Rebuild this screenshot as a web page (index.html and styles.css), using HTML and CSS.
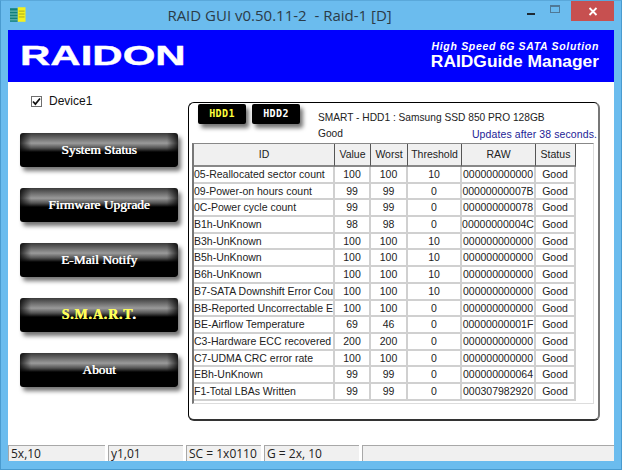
FILE: index.html
```html
<!DOCTYPE html>
<html lang="en">
<head>
<meta charset="UTF-8" />
<title>RAID GUI</title>
<link rel="stylesheet" href="styles.css">
</head>
<body>
<div class="window">
    <div class="titlebar">
        <svg class="app-icon" width="16" height="16" viewBox="0 0 16 16">
            <rect x="0" y="1" width="8" height="14" fill="#12807c" />
            <rect x="8" y="0" width="8" height="15" fill="#f4f01e" />
            <path d="M0 4h8M0 7h8M0 10h8M0 13h8" stroke="#7cc4c0" stroke-width="1" />
            <path d="M9 4h6M9 7h6M9 10h6" stroke="#a8a820" stroke-width="1" />
        </svg>
        <div class="title">RAID GUI v0.50.11-2&nbsp; - Raid-1 [D]</div>
        <div class="win-btn min"><span></span></div>
        <div class="win-btn max"><span></span></div>
        <div class="win-btn close">
            <svg width="10" height="9" viewBox="0 0 10 9"><path d="M1.5 1l7 7M8.5 1l-7 7" stroke="#fff" stroke-width="1.8" /></svg>
        </div>
    </div>

    <div class="client">
        <div class="banner">
            <div class="logo">RAIDON</div>
            <div class="tagline">
                <div class="tag-small">High Speed 6G SATA Solution</div>
                <div class="tag-big">RAIDGuide Manager</div>
            </div>
        </div>

        <div class="main">
            <div class="sidebar">
                <label class="device">
                    <span class="checkbox">
                        <svg width="9" height="9" viewBox="0 0 9 9"><path d="M1 4.5l2.4 2.6L8 1.5" fill="none" stroke="#111" stroke-width="1.7" /></svg>
                    </span>
                    Device1
                </label>
                <div class="nav">
                    <div class="nav-btn">System Status</div>
                    <div class="nav-btn">Firmware Upgrade</div>
                    <div class="nav-btn">E-Mail Notify</div>
                    <div class="nav-btn active">S.M.A.R.T<span class="dot">.</span></div>
                    <div class="nav-btn">About</div>
                </div>
            </div>

            <div class="panel">
                <div class="panel-top">
                    <div class="tabs">
                        <div class="tab active">HDD1</div>
                        <div class="tab">HDD2</div>
                    </div>
                    <div class="info">
                        <div>SMART - HDD1 : Samsung SSD 850 PRO 128GB</div>
                        <div class="info-line">
                            <span>Good</span>
                            <span class="updates">Updates after 38 seconds.</span>
                        </div>
                    </div>
                </div>

                <div class="grid">
                    <div class="row head">
                        <div>ID</div><div>Value</div><div>Worst</div><div>Threshold</div><div>RAW</div><div>Status</div>
                    </div>
                    <div class="row"><div>05-Reallocated sector count</div><div>100</div><div>100</div><div>10</div><div>000000000000</div><div>Good</div></div>
                    <div class="row"><div>09-Power-on hours count</div><div>99</div><div>99</div><div>0</div><div>00000000007B</div><div>Good</div></div>
                    <div class="row"><div>0C-Power cycle count</div><div>99</div><div>99</div><div>0</div><div>000000000078</div><div>Good</div></div>
                    <div class="row"><div>B1h-UnKnown</div><div>98</div><div>98</div><div>0</div><div>00000000004C</div><div>Good</div></div>
                    <div class="row"><div>B3h-UnKnown</div><div>100</div><div>100</div><div>10</div><div>000000000000</div><div>Good</div></div>
                    <div class="row"><div>B5h-UnKnown</div><div>100</div><div>100</div><div>10</div><div>000000000000</div><div>Good</div></div>
                    <div class="row"><div>B6h-UnKnown</div><div>100</div><div>100</div><div>10</div><div>000000000000</div><div>Good</div></div>
                    <div class="row"><div>B7-SATA Downshift Error Count</div><div>100</div><div>100</div><div>10</div><div>000000000000</div><div>Good</div></div>
                    <div class="row"><div>BB-Reported Uncorrectable Errors</div><div>100</div><div>100</div><div>0</div><div>000000000000</div><div>Good</div></div>
                    <div class="row"><div>BE-Airflow Temperature</div><div>69</div><div>46</div><div>0</div><div>00000000001F</div><div>Good</div></div>
                    <div class="row"><div>C3-Hardware ECC recovered</div><div>200</div><div>200</div><div>0</div><div>000000000000</div><div>Good</div></div>
                    <div class="row"><div>C7-UDMA CRC error rate</div><div>100</div><div>100</div><div>0</div><div>000000000000</div><div>Good</div></div>
                    <div class="row"><div>EBh-UnKnown</div><div>99</div><div>99</div><div>0</div><div>000000000064</div><div>Good</div></div>
                    <div class="row"><div>F1-Total LBAs Written</div><div>99</div><div>99</div><div>0</div><div>000307982920</div><div>Good</div></div>
                </div>
            </div>
        </div>

        <div class="statusbar">
            <div class="cell w1">5x,10</div>
            <div class="cell w2">y1,01</div>
            <div class="cell w2">SC = 1x0110</div>
            <div class="cell w4">G = 2x, 10</div>
            <div class="cell fill"></div>
        </div>
    </div>
</div>
</body>
</html>
```

FILE: styles.css
```css
* {
    box-sizing: border-box;
}
body, html {
    margin: 0;
    height: 100%;
    font-family: "Liberation Sans", Arial, sans-serif;
}
.window {
    width: 622px;
    height: 470px;
    background: #6bbcee;
    border: 1px solid #4a9bcf;
    border-top-color: #5aa8da;
    padding: 0 7px 8px 7px;
    display: flex;
    flex-direction: column;
}

/* title bar */
.titlebar {
    height: 29px;
    display: flex;
    align-items: flex-start;
    flex-shrink: 0;
}
.app-icon {
    margin: 6px 0 0 2px;
}
.title {
    width: 524px;
    padding-top: 5px;
    text-align: center;
    font-family: "Open Sans", sans-serif;
    font-size: 15px;
    line-height: 18px;
    color: #2b3b47;
}
.win-btn {
    display: flex;
    align-items: center;
    justify-content: center;
}
.win-btn.min {
    width: 16px;
    height: 20px;
    margin-left: -10px;
}
.win-btn.min span {
    width: 8px;
    height: 2px;
    margin-top: 6px;
    background: #1e2a33;
}
.win-btn.max {
    width: 26px;
    height: 20px;
    margin-left: 1px;
}
.win-btn.max span {
    width: 10px;
    height: 8px;
    margin: -4px 0 0 4px;
    border: 1px solid #4f7896;
    border-top-width: 2px;
}
.win-btn.close {
    width: 44px;
    height: 20px;
    margin-left: 6px;
    background: #c75050;
}

/* client area */
.client {
    flex: 1;
    background: #fff;
    display: flex;
    flex-direction: column;
    min-height: 0;
}
.banner {
    height: 52px;
    background: #0000fe;
    color: #fff;
    display: flex;
    justify-content: space-between;
    flex-shrink: 0;
}
.logo {
    font-weight: bold;
    font-size: 28px;
    line-height: 28px;
    margin: 12px 0 0 12px;
    transform: scaleX(1.5);
    transform-origin: left center;
    -webkit-text-stroke: 0.4px #fff;
}
.tagline {
    padding: 11px 15px 0 0;
    text-align: right;
}
.tag-small {
    font-size: 10.5px;
    line-height: 11px;
    font-weight: bold;
    font-style: italic;
    letter-spacing: 0.68px;
}
.tag-big {
    font-size: 17.4px;
    line-height: 19px;
    font-weight: bold;
}

.main {
    flex: 1;
    display: flex;
    min-height: 0;
}
.sidebar {
    width: 180px;
    flex-shrink: 0;
}
.device {
    display: flex;
    align-items: center;
    gap: 7px;
    margin: 12px 0 0 23px;
    font-size: 12px;
    line-height: 14px;
    color: #111;
}
.checkbox {
    width: 11px;
    height: 11px;
    border: 1px solid #6f6f6f;
    background: #fff;
    display: flex;
    align-items: center;
    justify-content: center;
}
.nav {
    display: flex;
    flex-direction: column;
    gap: 21px;
    margin: 25px 0 0 12px;
}
.nav-btn {
    width: 158px;
    height: 34px;
    border-radius: 3px;
    background:
        linear-gradient(90deg, rgba(0, 0, 0, 0.75), rgba(0, 0, 0, 0) 7%, rgba(0, 0, 0, 0) 93%, rgba(0, 0, 0, 0.75)),
        linear-gradient(#3a3a3a 0, #6a6a6a 15%, #9a9a9a 30%, #555 44%, #000 56%, #000 100%);
    box-shadow: 3px 4px 4px rgba(0, 0, 0, 0.55);
    color: #fff;
    font-family: "Liberation Serif", serif;
    font-size: 13.4px;
    line-height: 34px;
    text-align: center;
    text-shadow: 0.5px 0 0 currentColor;
}
.nav-btn.active {
    color: #ffff5a;
    font-weight: bold;
    font-size: 14px;
    letter-spacing: 0.8px;
}
.dot {
    color: #fff;
}

/* smart panel */
.panel {
    width: 412px;
    height: 319px;
    margin-top: 20px;
    padding: 0 1px 0 3px;
    border: 1px solid #000;
    border-right: 2px solid #777;
    border-bottom: 2px solid #333;
    border-radius: 6px;
}
.panel-top {
    height: 40px;
    display: flex;
}
.tabs {
    display: flex;
    gap: 6px;
    margin-left: 6px;
    width: 120px;
    flex-shrink: 0;
}
.tab {
    width: 48px;
    height: 20px;
    margin-top: 1px;
    background: #000;
    border-radius: 2px;
    box-shadow: 3px 4px 4px rgba(0, 0, 0, 0.55);
    color: #fff;
    font-family: "DejaVu Sans Mono", monospace;
    font-weight: bold;
    font-size: 10px;
    line-height: 19px;
    letter-spacing: 0.4px;
    text-align: center;
}
.tab.active {
    color: #ffff3c;
}
.info {
    flex: 1;
    font-size: 10.2px;
    line-height: 16px;
    color: #222;
    padding-top: 7px;
}
.info-line {
    display: flex;
    justify-content: space-between;
}
.updates {
    color: #1c1c96;
    font-size: 10.5px;
    letter-spacing: 0.1px;
}

.grid {
    width: 402px;
    height: 261px;
    border-top: 1px solid #888;
    border-left: 2px solid #777;
    border-right: 1px solid #ddd;
    border-bottom: 1px solid #ddd;
    font-size: 10.5px;
    color: #222;
    overflow: hidden;
}
.row {
    display: grid;
    grid-template-columns: 141px 36px 37px 54px 74px 40px;
    width: 382px;
    height: 16.7px;
    line-height: 14px;
}
.row > div {
    border-right: 2px solid #d0d0d0;
    border-bottom: 2px solid #d0d0d0;
    text-align: center;
    white-space: nowrap;
    overflow: hidden;
}
.row > div:first-child {
    text-align: left;
}
.row.head {
    height: 23px;
    background: #f0f0f0;
}
.row.head > div {
    line-height: 21px;
    border-right: 1px solid #555;
    border-bottom: 2px solid #888;
    text-align: center;
}

/* status bar */
.statusbar {
    height: 16px;
    flex-shrink: 0;
    display: flex;
    gap: 3px;
    font-family: "Open Sans", sans-serif;
    font-size: 12px;
    line-height: 16px;
    color: #222;
}
.cell {
    background: #f0f0f0;
    border-top: 1px solid #a8a8a8;
    border-left: 1px solid #a8a8a8;
    padding-left: 2px;
    overflow: hidden;
    white-space: nowrap;
}
.w1 {
    width: 97px;
}
.w2 {
    width: 75px;
}
.w4 {
    width: 95px;
}
.fill {
    flex: 1;
}
```
